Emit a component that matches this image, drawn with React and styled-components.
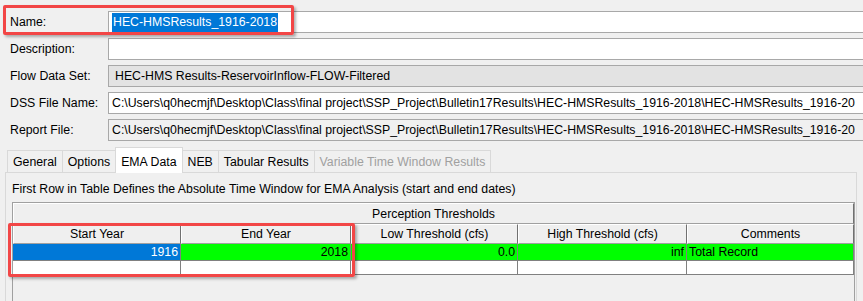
import React from "react";
import styled, { createGlobalStyle } from "styled-components";

const GlobalStyle = createGlobalStyle`
  html, body {
    margin: 0;
    padding: 0;
    background: #f0f0f0;
  }
  body {
    font-family: "Liberation Sans", Arial, sans-serif;
    font-size: 12.3px;
    color: #000;
  }
`;

const Window = styled.div`
  position: relative;
  width: 863px;
  height: 301px;
  overflow: hidden;
  background: #f0f0f0;
`;

const Form = styled.div`
  display: grid;
  grid-template-columns: 98px 790px;
  grid-auto-rows: 22px;
  row-gap: 5px;
  padding: 11px 0 0 10px;
`;

const Label = styled.div`
  display: flex;
  align-items: center;
  white-space: nowrap;
`;

const Field = styled.div`
  display: flex;
  align-items: center;
  box-sizing: border-box;
  padding-left: ${(p) => (p.$disabled ? "6px" : "3px")};
  border: 1px solid #a8a8a8;
  background: ${(p) => (p.$disabled ? "#e3e3e3" : p.$readonly ? "#f0f0f0" : "#fff")};
  white-space: nowrap;
  overflow: hidden;
`;

const Selected = styled.span`
  display: inline-block;
  height: 19px;
  line-height: 19px;
  padding: 0 1px;
  background: #0078d7;
  color: #fff;
`;

const TabStrip = styled.div`
  display: flex;
  align-items: flex-end;
  height: 25px;
  margin: 6px 0 0 8px;
  position: relative;
  z-index: 1;
`;

const Tab = styled.div`
  box-sizing: border-box;
  height: ${(p) => (p.$active ? "26px" : "22px")};
  margin-bottom: ${(p) => (p.$active ? "-1px" : "0")};
  padding: ${(p) => (p.$active ? "3px 5px 0" : "0 5px")};
  display: flex;
  align-items: center;
  border: 1px solid #d9d9d9;
  border-bottom: none;
  margin-left: -1px;
  background: ${(p) => (p.$active ? "#fff" : "#f0f0f0")};
  color: ${(p) => (p.$disabled ? "#a0a0a0" : "#000")};
  white-space: nowrap;
`;

const Panel = styled.div`
  box-sizing: border-box;
  margin-left: 5px;
  width: 852px;
  height: 140px;
  padding: 9px 6px 0;
  border: 1px solid #d9d9d9;
  border-bottom: none;
  background: #f0f0f0;
`;

const Caption = styled.div`
  height: 14px;
  line-height: 14px;
  white-space: nowrap;
`;

const ScrollPane = styled.div`
  box-sizing: border-box;
  margin-top: 6px;
  width: 843px;
  height: 120px;
  border: 1px solid #a0a0a0;
  background: #f0f0f0;
`;

const Grid = styled.table`
  width: 841px;
  table-layout: fixed;
  border-collapse: separate;
  border-spacing: 0;
  font-size: 12.3px;
`;

const HeadCell = styled.th`
  box-sizing: border-box;
  height: ${(p) => (p.$top ? "21px" : "20px")};
  padding: 0;
  font-weight: normal;
  text-align: center;
  background: #efefef;
  border-top: 1px solid #fff;
  border-left: 1px solid #fff;
  border-bottom: 1px solid #a0a0a0;
  border-right: 1px solid #707070;
  white-space: nowrap;
`;

const Cell = styled.td`
  box-sizing: border-box;
  height: ${(p) => (p.$short ? "14px" : "17px")};
  padding: 0 2px;
  text-align: ${(p) => (p.$left ? "left" : "right")};
  background: ${(p) => p.$bg || "#fff"};
  color: ${(p) => (p.$bg === "#0078d7" ? "#fff" : "#000")};
  border-right: 1px solid #808080;
  border-bottom: 1px solid #808080;
  white-space: nowrap;
  overflow: hidden;
  line-height: 16px;
`;

const Callout = styled.div`
  position: absolute;
  left: ${(p) => p.$x}px;
  top: ${(p) => p.$y}px;
  width: ${(p) => p.$w}px;
  height: ${(p) => p.$h}px;
  box-sizing: border-box;
  border: 3px solid #f24646;
  border-radius: 2px;
  box-shadow: 2px 2px 3px rgba(0, 0, 0, 0.3);
  pointer-events: none;
`;

const path =
  "C:\\Users\\q0hecmjf\\Desktop\\Class\\final project\\SSP_Project\\Bulletin17Results\\HEC-HMSResults_1916-2018\\HEC-HMSResults_1916-20";

const tabs = [
  { name: "General" },
  { name: "Options" },
  { name: "EMA Data", active: true },
  { name: "NEB" },
  { name: "Tabular Results" },
  { name: "Variable Time Window Results", disabled: true },
];

const columns = [
  { title: "Start Year", width: 168 },
  { title: "End Year", width: 170 },
  { title: "Low Threshold (cfs)", width: 167 },
  { title: "High Threshold (cfs)", width: 169 },
  { title: "Comments", width: 167 },
];

const GREEN = "#00ff00";

export default function App() {
  return (
    <Window>
      <GlobalStyle />
      <Form>
        <Label>Name:</Label>
        <Field>
          <Selected>HEC-HMSResults_1916-2018</Selected>
        </Field>
        <Label>Description:</Label>
        <Field />
        <Label>Flow Data Set:</Label>
        <Field $disabled>HEC-HMS Results-ReservoirInflow-FLOW-Filtered</Field>
        <Label>DSS File Name:</Label>
        <Field>{path}</Field>
        <Label>Report File:</Label>
        <Field $readonly>{path}</Field>
      </Form>

      <TabStrip>
        {tabs.map((t) => (
          <Tab key={t.name} $active={t.active} $disabled={t.disabled}>
            {t.name}
          </Tab>
        ))}
      </TabStrip>
      <Panel>
        <Caption>
          First Row in Table Defines the Absolute Time Window for EMA Analysis (start and end dates)
        </Caption>
        <ScrollPane>
          <Grid>
            <colgroup>
              {columns.map((c) => (
                <col key={c.title} style={{ width: c.width }} />
              ))}
            </colgroup>
            <thead>
              <tr>
                <HeadCell $top colSpan={5}>
                  Perception Thresholds
                </HeadCell>
              </tr>
              <tr>
                {columns.map((c) => (
                  <HeadCell key={c.title}>{c.title}</HeadCell>
                ))}
              </tr>
            </thead>
            <tbody>
              <tr>
                <Cell $bg="#0078d7">1916</Cell>
                <Cell $bg={GREEN}>2018</Cell>
                <Cell $bg={GREEN}>0.0</Cell>
                <Cell $bg={GREEN}>inf</Cell>
                <Cell $bg={GREEN} $left>
                  Total Record
                </Cell>
              </tr>
              <tr>
                <Cell $short />
                <Cell $short />
                <Cell $short />
                <Cell $short />
                <Cell $short />
              </tr>
            </tbody>
          </Grid>
        </ScrollPane>
      </Panel>

      <Callout $x={3} $y={5} $w={291} $h={30} />
      <Callout $x={8} $y={223} $w={347} $h={54} />
    </Window>
  );
}
